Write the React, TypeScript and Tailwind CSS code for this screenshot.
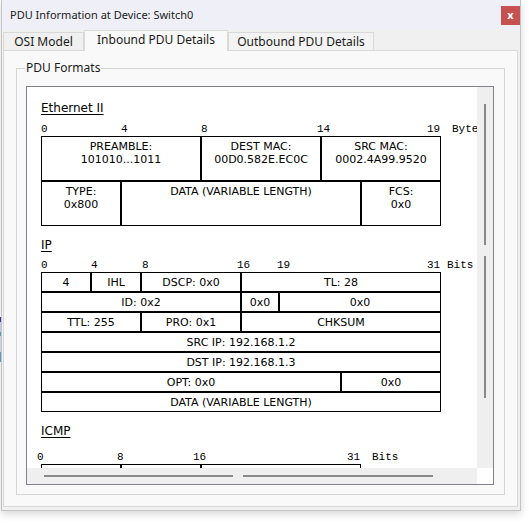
import React from "react";

const ui = { fontFamily: '"Noto Sans", "Liberation Sans", sans-serif' };
const diag = { fontFamily: '"DejaVu Sans", "Liberation Sans", sans-serif' };
const mono = { fontFamily: '"Liberation Mono", "DejaVu Sans Mono", monospace' };

function Label({ left, children }: { left: string; children: React.ReactNode }) {
  return (
    <span className={`absolute top-0 whitespace-nowrap ${left}`} style={mono}>
      {children}
    </span>
  );
}

export default function App() {
  return (
    <div className="relative w-[529px] h-[525px] bg-white overflow-hidden" style={ui}>
      {/* background peeking at left edge */}
      <div className="absolute left-0 top-[317px] w-[1px] h-[5px] bg-[#3b3b8c]" />
      <div className="absolute left-0 top-[322px] w-[1px] h-[10px] bg-[#b9cbe0]" />
      <div className="absolute left-0 top-[332px] w-[1px] h-[4px] bg-[#5b9ab6]" />
      <div className="absolute left-0 top-[336px] w-[1px] h-[16px] bg-[#c3d5e4]" />
      <div className="absolute left-0 top-[352px] w-[1px] h-[10px] bg-[#5b9ab6]" />

      {/* window */}
      <div className="ml-[1px] w-[520px] h-[511px] border-x border-b border-[#c4c4c4] bg-[#f0f0f0] flex flex-col shadow-[0_3px_8px_rgba(0,0,0,0.16)]">
        {/* title bar */}
        <div className="relative h-[30px] bg-[#eff0f7] flex items-center pl-[8px] text-[11px] text-[#1a1a1a]">
          PDU Information at Device: Switch0
          <div className="absolute right-0 top-[6px] w-[19px] h-[19px] bg-[#c75050] flex items-center justify-center text-white text-[11px] font-bold leading-none pb-[2px]">
            x
          </div>
        </div>

        {/* tabs */}
        <div className="h-[20px] flex items-end pl-[1px] text-[12px] text-[#1a1a1a]">
          <div className="w-[81px] h-[18px] border border-b-0 border-[#d9d9d9] bg-[#f0f0f0] flex items-center justify-center">
            OSI Model
          </div>
          <div className="relative z-10 -mb-px w-[144px] h-[21px] border border-b-0 border-[#d9d9d9] bg-[#f9f9f9] flex items-center justify-center pb-[2px]">
            Inbound PDU Details
          </div>
          <div className="w-[146px] h-[18px] border border-b-0 border-[#d9d9d9] bg-[#f3f3f3] flex items-center justify-center">
            Outbound PDU Details
          </div>
        </div>

        {/* panel */}
        <div className="ml-[1px] w-[515px] h-[457px] border border-[#d9d9d9] bg-[#f9f9f9]">
          {/* group box */}
          <div className="relative ml-[12px] mt-[17px] w-[489px] h-[427px] border border-[#d5d5d5]">
            <div className="absolute -top-[9px] left-[8px] px-[1px] bg-[#f9f9f9] text-[12px] leading-[16px] text-[#1a1a1a]">
              PDU Formats
            </div>

            {/* scroll pane */}
            <div className="ml-[9px] mt-[17px] w-[468px] h-[399px] border border-[#82828c] bg-white flex flex-col">
              <div className="flex h-[381px]">
                {/* viewport */}
                <div className="w-[450px] h-[381px] overflow-hidden pl-[14px] pt-[14px] text-black">
                  {/* Ethernet II */}
                  <div className="h-[14px] leading-[14px] text-[12px] underline underline-offset-[2px]" style={diag}>
                    Ethernet II
                  </div>
                  <div className="relative mt-[8px] h-[13px] leading-[13px] text-[11px]">
                    <Label left="left-[0px]">0</Label>
                    <Label left="left-[80px]">4</Label>
                    <Label left="left-[160px]">8</Label>
                    <Label left="left-[276px]">14</Label>
                    <Label left="left-[386px]">19</Label>
                    <Label left="left-[411px]">Bytes</Label>
                  </div>
                  <div className="w-[400px] text-[11px] leading-[13px]" style={diag}>
                    <div className="flex">
                      <div className="w-[160px] h-[45px] border border-black text-center pt-[3px]">
                        PREAMBLE:<br />101010...1011
                      </div>
                      <div className="w-[120px] h-[45px] border border-black text-center pt-[3px]">
                        DEST MAC:<br />00D0.582E.EC0C
                      </div>
                      <div className="w-[120px] h-[45px] border border-black text-center pt-[3px]">
                        SRC MAC:<br />0002.4A99.9520
                      </div>
                    </div>
                    <div className="flex">
                      <div className="w-[80px] h-[45px] border border-black text-center pt-[3px]">
                        TYPE:<br />0x800
                      </div>
                      <div className="w-[240px] h-[45px] border border-black text-center pt-[3px]">
                        DATA (VARIABLE LENGTH)
                      </div>
                      <div className="w-[80px] h-[45px] border border-black text-center pt-[3px]">
                        FCS:<br />0x0
                      </div>
                    </div>
                  </div>

                  {/* IP */}
                  <div className="mt-[12px] h-[14px] leading-[14px] text-[12px] underline underline-offset-[2px]" style={diag}>
                    IP
                  </div>
                  <div className="relative mt-[7px] h-[13px] leading-[13px] text-[11px]">
                    <Label left="left-[0px]">0</Label>
                    <Label left="left-[50px]">4</Label>
                    <Label left="left-[101px]">8</Label>
                    <Label left="left-[196px]">16</Label>
                    <Label left="left-[236px]">19</Label>
                    <Label left="left-[386px]">31</Label>
                    <Label left="left-[406px]">Bits</Label>
                  </div>
                  <div className="w-[400px] text-[11px] leading-[13px]" style={diag}>
                    <div className="flex">
                      <div className="w-[50px] h-[20px] border border-black flex items-center justify-center">4</div>
                      <div className="w-[50px] h-[20px] border border-black flex items-center justify-center">IHL</div>
                      <div className="w-[100px] h-[20px] border border-black flex items-center justify-center">DSCP: 0x0</div>
                      <div className="w-[200px] h-[20px] border border-black flex items-center justify-center">TL: 28</div>
                    </div>
                    <div className="flex">
                      <div className="w-[200px] h-[20px] border border-black flex items-center justify-center">ID: 0x2</div>
                      <div className="w-[38px] h-[20px] border border-black flex items-center justify-center">0x0</div>
                      <div className="w-[162px] h-[20px] border border-black flex items-center justify-center">0x0</div>
                    </div>
                    <div className="flex">
                      <div className="w-[100px] h-[20px] border border-black flex items-center justify-center">TTL: 255</div>
                      <div className="w-[100px] h-[20px] border border-black flex items-center justify-center">PRO: 0x1</div>
                      <div className="w-[200px] h-[20px] border border-black flex items-center justify-center">CHKSUM</div>
                    </div>
                    <div className="w-[400px] h-[20px] border border-black flex items-center justify-center">SRC IP: 192.168.1.2</div>
                    <div className="w-[400px] h-[20px] border border-black flex items-center justify-center">DST IP: 192.168.1.3</div>
                    <div className="flex">
                      <div className="w-[300px] h-[20px] border border-black flex items-center justify-center">OPT: 0x0</div>
                      <div className="w-[100px] h-[20px] border border-black flex items-center justify-center">0x0</div>
                    </div>
                    <div className="w-[400px] h-[20px] border border-black flex items-center justify-center">DATA (VARIABLE LENGTH)</div>
                  </div>

                  {/* ICMP */}
                  <div className="mt-[12px] h-[14px] leading-[14px] text-[12px] underline underline-offset-[2px]" style={diag}>
                    ICMP
                  </div>
                  <div className="relative mt-[13px] h-[13px] leading-[13px] text-[11px]">
                    <Label left="-left-[4px]">0</Label>
                    <Label left="left-[76px]">8</Label>
                    <Label left="left-[152px]">16</Label>
                    <Label left="left-[306px]">31</Label>
                    <Label left="left-[331px]">Bits</Label>
                  </div>
                  <div className="flex w-[320px]">
                    <div className="w-[80px] h-[30px] border border-black" />
                    <div className="w-[80px] h-[30px] border border-black" />
                    <div className="w-[160px] h-[30px] border border-black" />
                  </div>
                </div>

                {/* vertical scrollbar */}
                <div className="w-[16px] h-[381px] bg-[#efefef] pl-[7px] pt-[17px] flex flex-col">
                  <div className="w-[2px] h-[141px] bg-[#8a8a8a]" />
                  <div className="mt-[11px] w-[2px] h-[142px] bg-[#8a8a8a]" />
                </div>
              </div>

              <div className="flex h-[16px]">
                {/* horizontal scrollbar */}
                <div className="w-[450px] h-[16px] bg-[#efefef] flex items-center pl-[17px]">
                  <div className="w-[189px] h-[2px] bg-[#8a8a8a]" />
                  <div className="ml-[10px] w-[190px] h-[2px] bg-[#8a8a8a]" />
                </div>
                <div className="w-[16px] h-[16px] bg-white" />
              </div>
            </div>
          </div>
        </div>
      </div>
    </div>
  );
}
